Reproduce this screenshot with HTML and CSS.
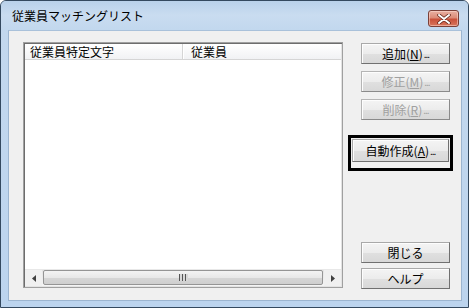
FILE: index.html
```html
<!DOCTYPE html>
<html lang="ja">
<head>
<meta charset="utf-8">
<title>従業員マッチングリスト</title>
<link rel="stylesheet" href="styles.css">
</head>
<body>
<div class="window">
  <div class="titlebar">
    <span class="title">従業員マッチングリスト</span>
    <div class="close">
      <svg width="14" height="10" viewBox="0 0 14 10"><path d="M2 1 L12 9 M12 1 L2 9" stroke="#5a2014" stroke-width="3.4" stroke-linecap="round"/><path d="M2 1 L12 9 M12 1 L2 9" stroke="#ffffff" stroke-width="2" stroke-linecap="round"/></svg>
    </div>
  </div>
  <div class="client">
    <div class="listview">
      <div class="header">
        <div class="col col1">従業員特定文字</div>
        <div class="col col2">従業員</div>
      </div>
      <div class="items"></div>
      <div class="hscroll">
        <div class="arrow"><svg width="4" height="7" viewBox="0 0 4 7"><path d="M4 0 L0 3.5 L4 7 Z" fill="#404040"/></svg></div>
        <div class="track">
          <div class="thumb"><span class="grip"></span></div>
        </div>
        <div class="arrow"><svg width="4" height="7" viewBox="0 0 4 7"><path d="M0 0 L4 3.5 L0 7 Z" fill="#404040"/></svg></div>
      </div>
    </div>
    <div class="buttons">
      <button class="btn">追加(<u>N</u>)<span class="dots">...</span></button>
      <button class="btn" disabled>修正(<u>M</u>)<span class="dots">...</span></button>
      <button class="btn" disabled>削除(<u>R</u>)<span class="dots">...</span></button>
      <button class="btn auto">自動作成(<u>A</u>)<span class="dots">...</span></button>
      <button class="btn bottom">閉じる</button>
      <button class="btn">ヘルプ</button>
    </div>
  </div>
</div>
</body>
</html>
```
FILE: styles.css
```css
* { box-sizing: border-box; }
html, body { margin: 0; padding: 0; }
body {
  width: 469px;
  height: 308px;
  background: #ffffff;
  font-family: "Noto Sans CJK JP", "Noto Sans", sans-serif;
  font-size: 12px;
  color: #000;
  overflow: hidden;
}
.window {
  width: 469px;
  height: 308px;
  border: 1px solid #34495f;
  border-radius: 6px 6px 0 0;
  background: linear-gradient(to bottom, #b4cde8 0px, #c3d8ee 30px, #bcd4ee 100%);
  display: flex;
  flex-direction: column;
}
.titlebar {
  height: 29px;
  flex: none;
  display: flex;
  align-items: center;
  padding-left: 11px;
  position: relative;
  background: linear-gradient(to bottom, #b9d1ea 0px, #c9dcf0 14px, #c2d8ee 28px);
  border-radius: 5px 5px 0 0;
}
.title {
  font-size: 12px;
  line-height: 14px;
  color: #000;
}
.close {
  position: absolute;
  right: 9px;
  top: 9px;
  width: 31px;
  height: 17px;
  border: 1px solid #7a4038;
  border-radius: 3px;
  background: linear-gradient(to bottom, #e8b0a2 0%, #dc8c78 45%, #c9513a 55%, #d8765c 100%);
  display: flex;
  align-items: center;
  justify-content: center;
  box-shadow: inset 0 0 0 1px rgba(255, 225, 215, 0.5);
}
.client {
  flex: 1;
  margin: 0 6px 6px 7px;
  background: #f0f0f0;
  display: flex;
  padding: 12px 11px 11px 15px;
  gap: 9px;
  border: 1px solid #9cb5d0;
  border-top-color: #a9c1da;
}
.listview {
  width: 320px;
  height: 246px;
  flex: none;
  margin-top: -1px;
  margin-left: -1px;
  border: 1px solid #a0a0a0;
  box-shadow: inset 1px 1px 0 #6d6d6d, inset -1px -1px 0 #e3e3e3;
  background: #fff;
  display: flex;
  flex-direction: column;
  padding: 1px;
}
.header {
  height: 16px;
  flex: none;
  display: flex;
  background: linear-gradient(to bottom, #ffffff, #f1f2f4);
  border-bottom: 1px solid #d5d5d5;
}
.col {
  line-height: 15px;
  white-space: nowrap;
}
.col1 {
  width: 158px;
  padding-left: 5px;
  border-right: 1px solid #d5d5d5;
  box-shadow: 1px 0 0 #ffffff;
}
.col2 {
  padding-left: 8px;
}
.items { flex: 1; }
.hscroll {
  height: 17px;
  flex: none;
  display: flex;
  background: #f0f0f0;
  border-top: 1px solid #e8e8e8;
}
.arrow {
  width: 17px;
  flex: none;
  display: flex;
  align-items: center;
  justify-content: center;
}
.track {
  flex: 1;
  padding: 0 1px;
  display: flex;
  background: linear-gradient(to bottom, #e3e3e3, #f5f5f5);
}
.thumb {
  flex: 1;
  margin: 0 0 1px 0;
  border: 1px solid #959595;
  border-radius: 2px;
  background: linear-gradient(to bottom, #f3f3f3 0%, #e8e8e8 50%, #d6d6d6 51%, #cfcfcf 100%);
  display: flex;
  align-items: center;
  justify-content: center;
}
.grip {
  width: 9px;
  height: 7px;
  background: repeating-linear-gradient(to right, #555 0 1px, #d8d8d8 1px 3px);
}
.buttons {
  flex: 1;
  display: flex;
  flex-direction: column;
  align-items: flex-end;
}
.btn {
  width: 89px;
  height: 21px;
  padding: 0;
  font-family: inherit;
  font-size: 12px;
  line-height: 14px;
  color: #000;
  border: 1px solid;
  border-color: #a9a9a9 #707070 #707070 #a9a9a9;
  border-radius: 0;
  background: linear-gradient(to bottom, #f4f4f4 0%, #ececec 50%, #e0e0e0 51%, #d8d8d8 100%);
  box-shadow: inset 1px 1px 0 #fdfdfd;
  margin-bottom: 7px;
  display: flex;
  align-items: center;
  justify-content: center;
}
.btn u { text-decoration: underline; text-underline-offset: 1px; }
.dots { letter-spacing: -1px; font-size: 10px; padding-left: 1px; }
.btn:disabled {
  color: #a0a0a0;
  border-color: #b5b5b5 #8a8a8a #8a8a8a #b5b5b5;
}
.btn.auto {
  align-self: flex-start;
  width: 97px;
  height: 23px;
  margin-top: 12px;
  position: relative;
}
.btn.auto::after {
  content: "";
  position: absolute;
  left: -5px;
  top: -5px;
  right: -5px;
  bottom: -10px;
  border: 3px solid #000;
}
.btn.bottom {
  margin-top: auto;
  margin-bottom: 5px;
}
.btn:last-child { margin-bottom: 0; }
```
